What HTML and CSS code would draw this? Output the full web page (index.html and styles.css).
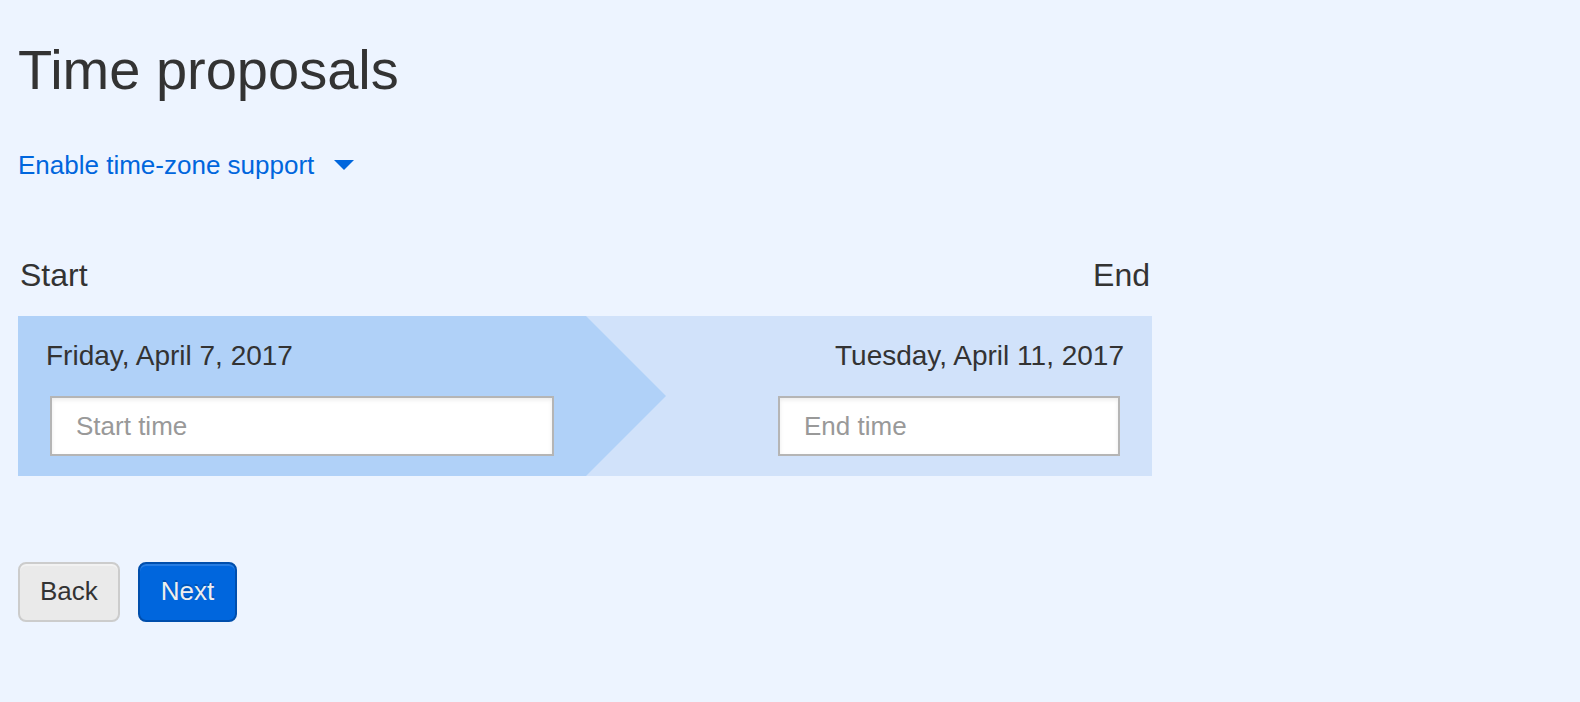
FILE: index.html
```html
<!DOCTYPE html>
<html lang="en">
<head>
<meta charset="utf-8">
<title>Time proposals</title>
<link rel="stylesheet" href="styles.css">
</head>
<body>
<main class="page">
  <h1 class="title">Time proposals</h1>
  <button class="timezone" type="button">Enable time-zone support
    <svg class="caret" viewBox="0 0 20 10" aria-hidden="true"><path d="M0 0h20L10 10z"/></svg>
  </button>
  <form class="proposal">
    <div class="labels">
      <label for="start">Start</label>
      <label for="end">End</label>
    </div>
    <div class="range">
      <section class="start">
        <p class="date">Friday, April 7, 2017</p>
        <input class="time" id="start" type="text" placeholder="Start time">
      </section>
      <svg class="arrow" viewBox="0 0 80 160" preserveAspectRatio="none" aria-hidden="true"><path d="M0 0L80 80L0 160z"/></svg>
      <section class="end">
        <p class="date">Tuesday, April 11, 2017</p>
        <input class="time" id="end" type="text" placeholder="End time">
      </section>
    </div>
    <div class="actions">
      <button class="button" type="button">Back</button>
      <button class="button primary" type="submit">Next</button>
    </div>
  </form>
</main>
</body>
</html>
```
FILE: styles.css
```css
* { box-sizing: border-box; }
body {
  margin: 0;
  background: #edf4ff;
  color: #333;
  font-family: "Liberation Sans", Arial, sans-serif;
}
.page { padding: 38px 18px; }
.title {
  margin: 0;
  font-size: 56px;
  font-weight: 400;
  line-height: 64px;
}
.timezone {
  display: flex;
  align-items: center;
  gap: 20px;
  margin-top: 47px;
  padding: 0;
  border: 0;
  background: none;
  color: #0066dd;
  font: 26px/32px "Liberation Sans", Arial, sans-serif;
}
.caret { width: 20px; height: 10px; fill: currentColor; }
.proposal { max-width: 1134px; margin-top: 74px; }
.labels {
  display: flex;
  justify-content: space-between;
  padding: 0 2px;
  font-size: 32px;
  line-height: 40px;
}
.range {
  display: flex;
  margin-top: 21px;
  background: #d1e2fa;
}
.start {
  flex: 1;
  padding: 20px 32px;
  background: #b0d1f8;
}
.arrow { width: 80px; height: 160px; fill: #b0d1f8; }
.end {
  flex: 0 0 486px;
  padding: 20px 32px 20px 112px;
}
.date {
  margin: 0 -4px;
  font-size: 28px;
  line-height: 40px;
  white-space: nowrap;
}
.end .date { text-align: right; }
.time {
  display: block;
  width: 100%;
  height: 60px;
  margin-top: 20px;
  padding: 0 24px;
  border: 2px solid #b5b5b5;
  background: #fff;
  box-shadow: inset 0 2px 4px rgba(0, 0, 0, 0.08);
  font: 26px/32px "Liberation Sans", Arial, sans-serif;
}
.time::placeholder { color: #999; opacity: 1; }
.actions { display: flex; gap: 18px; margin-top: 86px; }
.button {
  height: 60px;
  padding: 0 20px 2px;
  border: 2px solid #ccc;
  border-radius: 8px;
  background: #eaeaea;
  box-shadow: inset 0 2px 0 rgba(255, 255, 255, 0.4);
  color: #333;
  font: 26px/32px "Liberation Sans", Arial, sans-serif;
}
.primary {
  padding: 0 21px 2px;
  border-color: #004eac;
  background: #0066dd;
  box-shadow: inset 0 2px 0 rgba(255, 255, 255, 0.15);
  color: #eee;
  text-shadow: 0 -2px 0 rgba(0, 0, 0, 0.2);
}
```
